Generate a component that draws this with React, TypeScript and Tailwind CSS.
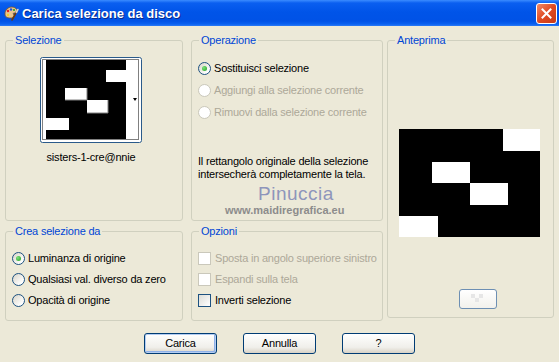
import type { ReactNode } from 'react';
import { clsx } from 'clsx';

function AppIcon() {
  return (
    <svg width="16" height="16" viewBox="0 0 16 16">
      <path d="M2 9c0-4 3-7 7-7 3 0 5 2 5 4 0 2-2 2-3 2s-1 1 0 2c1 1 0 3-3 3-4 0-6-1-6-4z" fill="#e9c58e" stroke="#7a5428" strokeWidth="0.8" />
      <circle cx="5" cy="6" r="1.2" fill="#e02020" />
      <circle cx="8" cy="4.5" r="1.2" fill="#2050e0" />
      <circle cx="11" cy="5" r="1.1" fill="#20a030" />
      <circle cx="5" cy="10" r="1.2" fill="#f0d020" />
      <path d="M9 15l5-9" stroke="#6b3a10" strokeWidth="1.6" strokeLinecap="round" />
      <path d="M13.4 7.2l1.4-2.6" stroke="#d0d0d0" strokeWidth="1.8" strokeLinecap="round" />
    </svg>
  );
}

function TitleBar() {
  return (
    <div className="flex h-[26px] shrink-0 items-center bg-[linear-gradient(to_bottom,#3b8cff_0px,#0a5ff0_3px,#0054e8_12px,#0052e6_21px,#0a60f0_24px,#2a7af5_26px)] pl-[3px] pr-[2px]">
      <AppIcon />
      <span className="ml-[3px] text-[13px] font-bold tracking-normal text-white [text-shadow:1px_1px_0_#0a2a8a]">
        Carica selezione da disco
      </span>
      <div className="ml-auto flex h-[21px] w-[21px] items-center justify-center rounded-[3px] border border-white bg-[linear-gradient(135deg,#f08a6a,#e04a22_50%,#c83a16)]">
        <svg width="11" height="11" viewBox="0 0 11 11">
          <path d="M1.5 1.5l8 8M9.5 1.5l-8 8" stroke="white" strokeWidth="2" strokeLinecap="square" />
        </svg>
      </div>
    </div>
  );
}

function Group({ title, className, children }: { title: string; className?: string; children: ReactNode }) {
  return (
    <fieldset className={clsx('rounded-[3px] border border-[#d0d0bf]', className)}>
      <legend className="ml-[7px] px-[2px] text-[#0046d5]">{title}</legend>
      {children}
    </fieldset>
  );
}

function Radio({ checked, disabled }: { checked?: boolean; disabled?: boolean }) {
  return (
    <span
      className={clsx(
        'flex h-[13px] w-[13px] shrink-0 items-center justify-center rounded-full border',
        disabled ? 'border-[#cac8bb] bg-white' : 'border-[#1c5180] bg-[linear-gradient(135deg,#d8d4c8,#ffffff_80%)]'
      )}
    >
      {checked && <span className="h-[5px] w-[5px] rounded-full bg-[radial-gradient(circle_at_35%_35%,#7ce07a,#21a121)]" />}
    </span>
  );
}

function Check({ disabled }: { disabled?: boolean }) {
  return (
    <span
      className={clsx(
        'h-[13px] w-[13px] shrink-0 border',
        disabled ? 'border-[#cac8bb] bg-white' : 'border-[#1c5180] bg-[linear-gradient(135deg,#dcdcd7,#ffffff)]'
      )}
    />
  );
}

function RadioRow({ label, checked, disabled, h }: { label: string; checked?: boolean; disabled?: boolean; h: string }) {
  return (
    <div className={clsx('flex items-center gap-[3px] whitespace-nowrap', h)}>
      <Radio checked={checked} disabled={disabled} />
      <span className={disabled ? 'text-[#aca899]' : 'text-black'}>{label}</span>
    </div>
  );
}

function CheckRow({ label, disabled }: { label: string; disabled?: boolean }) {
  return (
    <div className="flex h-[21px] items-center gap-[4px] whitespace-nowrap">
      <Check disabled={disabled} />
      <span className={disabled ? 'text-[#aca899]' : 'text-black'}>{label}</span>
    </div>
  );
}

function Thumbnail() {
  return (
    <svg width="102" height="86" viewBox="0 0 102 86">
      <rect x="0.5" y="0.5" width="101" height="85" rx="2" fill="white" stroke="#2a5a8a" />
      <rect x="6" y="3" width="80" height="79" fill="black" />
      <rect x="66" y="13" width="20" height="12" fill="white" />
      <rect x="25" y="31" width="22" height="12" fill="white" />
      <rect x="47" y="43" width="21" height="13" fill="white" />
      <rect x="6" y="61" width="23" height="12" fill="white" />
      <path d="M47 31v12M25 43h22M68 43v13M47 56h21" stroke="#808080" strokeWidth="1" />
      <rect x="2.5" y="2.5" width="96" height="80" fill="none" stroke="black" strokeDasharray="1 1" />
      <path d="M93 41h4l-2 3z" fill="black" />
    </svg>
  );
}

function Preview() {
  return (
    <svg width="141" height="108" viewBox="0 0 141 108">
      <rect width="141" height="108" fill="black" />
      <rect x="104" y="0" width="37" height="22" fill="white" />
      <rect x="33" y="33" width="38" height="21" fill="white" />
      <rect x="71" y="54" width="38" height="22" fill="white" />
      <rect x="0" y="87" width="39" height="21" fill="white" />
    </svg>
  );
}

function Button({ label, isDefault }: { label: string; isDefault?: boolean }) {
  return (
    <button
      className={clsx(
        'flex h-[21px] w-[73px] items-center justify-center rounded-[3px] border border-[#003c74] bg-[linear-gradient(to_bottom,#ffffff,#f0efea_70%,#d8d2c6)] text-black',
        isDefault && 'shadow-[inset_0_0_0_1px_#b4cdf2,inset_-1px_-1px_0_1px_#8fb1e8]'
      )}
    >
      {label}
    </button>
  );
}

export default function App() {
  return (
    <div className="flex h-[362px] w-[559px] flex-col overflow-hidden bg-[#ece9d8] font-['Liberation_Sans',Arial,sans-serif] text-[11px] leading-[13px] tracking-[-0.2px] text-black">
      <TitleBar />
      <div className="flex px-[5px] pt-[8px]">
        {/* left column */}
        <div className="flex w-[178px] flex-col gap-[4px]">
          <Group title="Selezione" className="h-[187px]">
            <div className="flex flex-col pl-[34px] pt-[10px]">
              <Thumbnail />
              <div className="mt-[8px] w-[102px] text-center">sisters-1-cre@nnie</div>
            </div>
          </Group>
          <Group title="Crea selezione da" className="h-[96px]">
            <div className="flex flex-col pl-[6px] pt-[10px]">
              <RadioRow h="h-[21px]" label="Luminanza di origine" checked />
              <RadioRow h="h-[21px]" label="Qualsiasi val. diverso da zero" />
              <RadioRow h="h-[21px]" label="Opacità di origine" />
            </div>
          </Group>
        </div>

        {/* middle column */}
        <div className="ml-[8px] flex w-[192px] flex-col gap-[4px]">
          <Group title="Operazione" className="h-[187px]">
            <div className="flex flex-col pl-[6px] pt-[10px]">
              <RadioRow h="h-[22px]" label="Sostituisci selezione" checked />
              <RadioRow h="h-[22px]" label="Aggiungi alla selezione corrente" disabled />
              <RadioRow h="h-[22px]" label="Rimuovi dalla selezione corrente" disabled />
              <p className="mt-[32px] whitespace-nowrap">
                Il rettangolo originale della selezione
                <br />
                intersecherà completamente la tela.
              </p>
              <div className="mt-[3px] pl-[60px] text-[19px] leading-[19px] tracking-[0.5px] text-[#8e95bb]">Pinuccia</div>
              <div className="mt-[1px] pl-[27px] font-bold tracking-normal text-[#8c8c8c]">www.maidiregrafica.eu</div>
            </div>
          </Group>
          <Group title="Opzioni" className="h-[96px]">
            <div className="flex flex-col pl-[6px] pt-[10px]">
              <CheckRow label="Sposta in angolo superiore sinistro" disabled />
              <CheckRow label="Espandi sulla tela" disabled />
              <CheckRow label="Inverti selezione" />
            </div>
          </Group>
        </div>

        {/* right column */}
        <div className="ml-[4px] w-[167px]">
          <Group title="Anteprima" className="h-[284px]">
            <div className="flex flex-col items-start pl-[11px] pt-[82px]">
              <Preview />
              <div className="ml-[60px] mt-[52px] flex h-[20px] w-[38px] items-center justify-center rounded-[3px] border border-[#6d8fb3] bg-[linear-gradient(to_bottom,#ffffff,#f2f1ec)]">
                <svg width="14" height="10" viewBox="0 0 14 10">
                  <rect x="0" y="0" width="4" height="4" fill="#e6e6e6" />
                  <rect x="8" y="0" width="4" height="4" fill="#e6e6e6" />
                  <rect x="4" y="4" width="4" height="4" fill="#e6e6e6" />
                </svg>
              </div>
            </div>
          </Group>
        </div>
      </div>

      <div className="flex justify-center gap-[26px] pt-[12px]">
        <Button label="Carica" isDefault />
        <Button label="Annulla" />
        <Button label="?" />
      </div>
    </div>
  );
}
